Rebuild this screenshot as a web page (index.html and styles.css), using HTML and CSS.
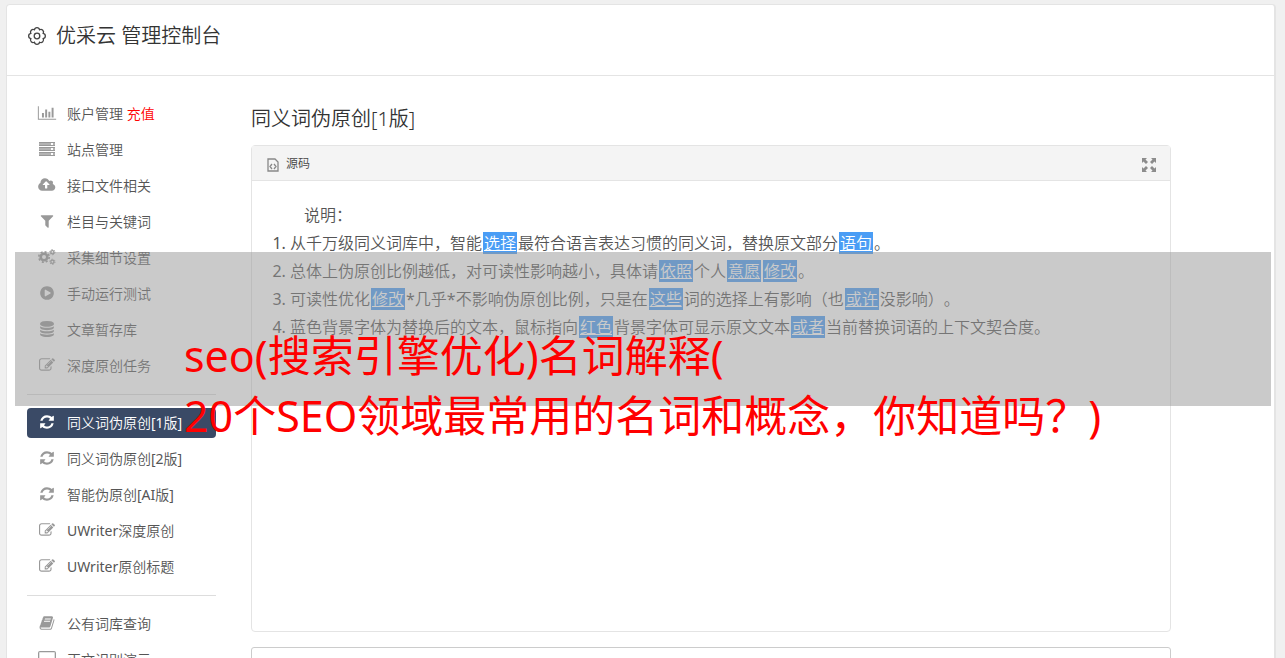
FILE: index.html
```html
<!DOCTYPE html>
<html lang="zh-CN">
<head>
  <meta charset="UTF-8">
  <meta name="viewport" content="width=device-width, initial-scale=1.0">
  <title>优采云 管理控制台</title>
  <link rel="stylesheet" href="styles.css">
</head>
<body>

<!-- Icon sprite -->
<svg class="sprite" aria-hidden="true">
  <symbol id="i-chart" viewBox="0 0 2048 1792"><path d="M680 896v512h-220v-512h220zm360-384v896h-220v-896h220zm1008 1024v128h-2048v-1536h110v1408h1938zm-648-768v640h-220v-640h220zm360-448v1088h-220v-1088h220z"/></symbol>
  <symbol id="i-server" viewBox="0 0 18 16"><path d="M1 1h16v4H1zM1 6h16v4H1zM1 11h16v4H1z" opacity=".75"/><path d="M1 1h16v1H1zM1 4h16v1H1zM1 6h16v1H1zM1 9h16v1H1zM1 11h16v1H1zM1 14h16v1H1z"/><path d="M13 2h2v2h-2zM13 7h2v2h-2zM13 12h2v2h-2z" fill="white"/></symbol>
  <symbol id="i-cloud" viewBox="0 0 1856 1792"><path d="M1216 864q0-14-9-23l-352-352q-9-9-23-9t-23 9l-351 351q-10 12-10 24 0 14 9 23t23 9h224v352q0 13 9.5 22.5t22.5 9.5h192q13 0 22.5-9.5t9.5-22.5v-352h224q13 0 22.5-9.5t9.5-22.5zm640 288q0 159-112.5 271.5t-271.5 112.5h-1088q-185 0-316.5-131.5t-131.5-316.5q0-130 70-240t188-165q-2-30-2-43 0-212 150-362t362-150q156 0 285.5 87t188.5 231q71-62 166-62 106 0 181 75t75 181q0 76-41 138 130 31 213.5 135.5t83.5 238.5z"/></symbol>
  <symbol id="i-filter" viewBox="0 0 1792 1792"><path d="M1595 295q17 41-14 70l-493 493v742q0 42-39 59-13 5-25 5-27 0-45-19l-256-256q-19-19-19-45v-486l-493-493q-31-29-14-70 17-39 59-39h1280q42 0 59 39z"/></symbol>
  <symbol id="i-cogs" viewBox="0 0 18 16">
    <g fill="none" stroke="currentColor">
      <circle cx="6" cy="8" r="3.3" stroke-width="2.6"/>
      <circle cx="6" cy="8" r="5.2" stroke-width="1.6" stroke-dasharray="2.04 2.04"/>
      <circle cx="14.4" cy="3.2" r="1.6" stroke-width="1.3"/>
      <circle cx="14.4" cy="3.2" r="2.6" stroke-width="1" stroke-dasharray="1.36 1.36"/>
      <circle cx="14.4" cy="12.8" r="1.6" stroke-width="1.3"/>
      <circle cx="14.4" cy="12.8" r="2.6" stroke-width="1" stroke-dasharray="1.36 1.36"/>
    </g>
  </symbol>
  <symbol id="i-play" viewBox="0 0 1792 1792"><path d="M896 128q209 0 385.5 103t279.5 279.5 103 385.5-103 385.5-279.5 279.5-385.5 103-385.5-103-279.5-279.5-103-385.5 103-385.5 279.5-279.5 385.5-103zm384 823q32-18 32-55t-32-55l-544-320q-31-19-64-1-32 19-32 56v640q0 37 32 56 16 8 32 8 17 0 32-9z"/></symbol>
  <symbol id="i-database" viewBox="0 0 1792 1792"><path d="M896 768q237 0 443-43t325-127v170q0 69-103 128t-280 93.5-385 34.5-385-34.5-280-93.5-103-128v-170q119 84 325 127t443 43zm0 768q237 0 443-43t325-127v170q0 69-103 128t-280 93.5-385 34.5-385-34.5-280-93.5-103-128v-170q119 84 325 127t443 43zm0-384q237 0 443-43t325-127v170q0 69-103 128t-280 93.5-385 34.5-385-34.5-280-93.5-103-128v-170q119 84 325 127t443 43zm0-1152q208 0 385 34.5t280 93.5 103 128v128q0 69-103 128t-280 93.5-385 34.5-385-34.5-280-93.5-103-128v-128q0-69 103-128t280-93.5 385-34.5z"/></symbol>
  <symbol id="i-edit" viewBox="0 0 1792 1792"><path d="M888 1184l116-116-152-152-116 116v56h96v96h56zm440-720q-16-16-33 1l-350 350q-17 17-1 33t33-1l350-350q17-17 1-33zm80 594v190q0 119-84.5 203.5t-203.5 84.5h-832q-119 0-203.5-84.5t-84.5-203.5v-832q0-119 84.5-203.5t203.5-84.5h832q63 0 117 25 15 7 18 23 3 17-9 29l-49 49q-14 14-32 8-23-6-45-6h-832q-66 0-113 47t-47 113v832q0 66 47 113t113 47h832q66 0 113-47t47-113v-126q0-13 9-22l64-64q15-15 35-7t20 29zm-96-738l288 288-672 672h-288v-288zm444 132l-92 92-288-288 92-92q28-28 68-28t68 28l152 152q28 28 28 68t-28 68z"/></symbol>
  <symbol id="i-refresh" viewBox="0 0 1792 1792"><path d="M1639 1056q0 5-1 7-64 268-268 434.5t-478 166.5q-146 0-282.5-55t-243.5-157l-129 129q-19 19-45 19t-45-19-19-45v-448q0-26 19-45t45-19h448q26 0 45 19t19 45-19 45l-137 137q71 66 161 102t187 36q134 0 250-65t186-179q11-17 53-117 8-23 30-23h192q13 0 22.5 9.5t9.5 22.5zm25-800v448q0 26-19 45t-45 19h-448q-26 0-45-19t-19-45 19-45l138-138q-148-137-349-137-134 0-250 65t-186 179q-11 17-53 117-8 23-30 23h-199q-13 0-22.5-9.5t-9.5-22.5v-7q65-268 270-434.5t480-166.5q146 0 284 55.5t245 156.5l130-129q19-19 45-19t45 19 19 45z"/></symbol>
  <symbol id="i-book" viewBox="0 0 1792 1792"><path d="M1703 478q40 57 18 129l-275 906q-19 64-76.500 107.500t-122.500 43.500h-923q-77 0-148.500-53.500t-99.500-131.500q-24-67-2-127 0-4 3-27t4-37q1-8-3-21.500t-3-19.500q2-11 8-21t16.500-23.500 16.500-23.500q23-38 45-91.500t30-91.500q3-10 .5-30t-.5-28q3-11 17-28t17-23q21-36 42-92t25-90q1-9-2.500-32t.5-28q4-13 22-30.500t22-22.500q19-26 42.500-84.500t27.500-96.500q1-8-3-25.500t-2-26.500q2-8 9-18t18-23 17-21q8-12 16.500-30.500t15-35 16-36 19.500-32 26.500-23.500 36-11.500 47.500 5.500l-1 3q38-9 51-9h761q74 0 114 56t18 130l-274 906q-36 119-71.500 153.500t-128.500 34.500h-869q-27 0-38 15-11 16-1 43 24 70 144 70h923q29 0 56-15.500t35-41.500l300-987q7-22 5-57 38 15 59 43zm-1064 2q-4 13 2 22.500t20 9.500h608q13 0 25.500-9.500t16.500-22.500l21-64q4-13-2-22.500t-20-9.500h-608q-13 0-25.500 9.500t-16.500 22.500zm-83 256q-4 13 2 22.500t20 9.500h608q13 0 25.500-9.500t16.500-22.500l21-64q4-13-2-22.500t-20-9.500h-608q-13 0-25.500 9.500t-16.500 22.500z"/></symbol>
  <symbol id="i-screen" viewBox="0 0 18 16"><path fill-rule="evenodd" d="M2 0h14a2 2 0 0 1 2 2v9a2 2 0 0 1-2 2h-5l1 3H6l1-3H2a2 2 0 0 1-2-2V2a2 2 0 0 1 2-2zM1.300 1.300v8.700h15.400V1.300z"/></symbol>
</svg>

<div class="container">
  <header class="header">
    <svg class="gear" viewBox="0 0 20 20" aria-hidden="true">
      <path d="M16.200 7.400A2.650 2.650 0 0 1 16.200 12.600A2.650 2.650 0 0 1 12.600 16.200A2.650 2.650 0 0 1 7.400 16.200A2.650 2.650 0 0 1 3.800 12.600A2.650 2.650 0 0 1 3.800 7.400A2.650 2.650 0 0 1 7.400 3.800A2.650 2.650 0 0 1 12.600 3.800A2.650 2.650 0 0 1 16.200 7.400Z"/>
      <circle cx="10" cy="10" r="2.800"/>
    </svg>
    <h1>优采云 管理控制台</h1>
  </header>

  <div class="content">
    <!-- Sidebar -->
    <nav class="sidebar">
      <a class="item" href="#"><svg class="icon"><use href="#i-chart"/></svg><span>账户管理 <span class="recharge">充值</span></span></a>
      <a class="item" href="#"><svg class="icon"><use href="#i-server"/></svg>站点管理</a>
      <a class="item" href="#"><svg class="icon"><use href="#i-cloud"/></svg>接口文件相关</a>
      <a class="item" href="#"><svg class="icon"><use href="#i-filter"/></svg>栏目与关键词</a>
      <a class="item" href="#"><svg class="icon"><use href="#i-cogs"/></svg>采集细节设置</a>
      <a class="item" href="#"><svg class="icon"><use href="#i-play"/></svg>手动运行测试</a>
      <a class="item" href="#"><svg class="icon"><use href="#i-database"/></svg>文章暂存库</a>
      <a class="item" href="#"><svg class="icon"><use href="#i-edit"/></svg>深度原创任务</a>
      <hr>
      <a class="item active" href="#"><svg class="icon"><use href="#i-refresh"/></svg>同义词伪原创[1版]</a>
      <a class="item" href="#"><svg class="icon"><use href="#i-refresh"/></svg>同义词伪原创[2版]</a>
      <a class="item" href="#"><svg class="icon"><use href="#i-refresh"/></svg>智能伪原创[AI版]</a>
      <a class="item" href="#"><svg class="icon"><use href="#i-edit"/></svg>UWriter深度原创</a>
      <a class="item" href="#"><svg class="icon"><use href="#i-edit"/></svg>UWriter原创标题</a>
      <hr>
      <a class="item" href="#"><svg class="icon"><use href="#i-book"/></svg>公有词库查询</a>
      <a class="item" href="#"><svg class="icon"><use href="#i-screen"/></svg>正文识别演示</a>
    </nav>

    <!-- Editor -->
    <main class="main">
      <h2>同义词伪原创[1版]</h2>
      <div class="editor">
        <div class="toolbar">
          <button type="button" class="source">
            <svg viewBox="0 0 12 14" aria-hidden="true"><path d="M1 1h7l3 3v9H1zM5 6L3 8.500l2 2.500M7 6l2 2.500L7 11"/></svg>
            源码
          </button>
          <button type="button" class="expand" aria-label="全屏">
            <svg viewBox="0 0 14 14" aria-hidden="true"><path d="M0 0h5L3.500 1.500 6 4 4 6 1.500 3.500 0 5zM14 0v5l-1.500-1.500L10 6 8 4l2.500-2.500L9 0zM0 14V9l1.500 1.500L4 8l2 2-2.500 2.500L5 14zM14 14H9l1.500-1.500L8 10l2-2 2.500 2.500L14 9z"/></svg>
          </button>
        </div>
        <div class="text">
          <p>说明：</p>
          <ol>
            <li>从千万级同义词库中，智能<u>选择</u>最符合语言表达习惯的同义词，替换原文部分<u>语句</u>。</li>
            <li>总体上伪原创比例越低，对可读性影响越小，具体请<u>依照</u>个人<u>意愿</u><u>修改</u>。</li>
            <li>可读性优化<u>修改</u>*几乎*不影响伪原创比例，只是在<u>这些</u>词的选择上有影响（也<u>或许</u>没影响）。</li>
            <li>蓝色背景字体为替换后的文本，鼠标指向<u>红色</u>背景字体可显示原文文本<u>或者</u>当前替换词语的上下文契合度。</li>
          </ol>
        </div>
      </div>
      <textarea class="input" aria-label="原文"></textarea>
    </main>
  </div>
</div>

<!-- Banner over the page -->
<div class="banner">
  seo(搜索引擎优化)名词解释(<br>20个SEO领域最常用的名词和概念，你知道吗？)
</div>

</body>
</html>
```
FILE: styles.css
```css
* {
  box-sizing: border-box;
}
body {
  margin: 0;
  height: 100vh;
  overflow: hidden;
  background-color: #f0f0f0;
  color: #555;
  font-family: "Noto Sans", "Noto Sans CJK SC DemiLight", "Noto Sans CJK SC", sans-serif;
  font-size: 14px;
  text-spacing-trim: space-all;
}
.sprite {
  display: none;
}
.container {
  margin: 4px 9px 0 6px;
  height: 100%;
  overflow: hidden;
  background-color: white;
  border: 1px solid #e4e4e4;
  border-right-width: 2px;
  border-radius: 4px;
}
.header {
  display: flex;
  align-items: center;
  gap: 9px;
  height: 71px;
  padding: 0 20px 9px;
  border-bottom: 1px solid #e4e4e4;
}
.gear {
  width: 20px;
  height: 20px;
  fill: none;
  stroke: #444;
  stroke-width: 1.3;
}
h1, h2 {
  margin: 0;
  color: #333;
  font-size: 20px;
  font-weight: 350;
  line-height: 30px;
}
.content {
  display: flex;
  gap: 35px;
  padding: 23px 103px 0 20px;
}
.sidebar {
  display: flex;
  flex-direction: column;
  gap: 6px;
  width: 189px;
  flex-shrink: 0;
}
.sidebar hr {
  width: 100%;
  margin: 7px 0;
  border: 0;
  border-top: 1px solid #ddd;
}
.item {
  display: flex;
  align-items: center;
  gap: 10px;
  height: 30px;
  padding: 0 10px 2px;
  border-radius: 4px;
  color: #555;
  text-decoration: none;
  white-space: nowrap;
}
.item.active {
  background-color: #3a4a66;
  color: white;
}
.icon {
  width: 20px;
  height: 16px;
  color: #999;
  fill: currentColor;
}
.active .icon {
  color: white;
}
.recharge {
  color: red;
}
.main {
  flex: 1;
  min-width: 0;
}
h2 {
  margin: 5px 0 11px;
}
.editor {
  min-height: 487px;
  border: 1px solid #e4e4e4;
  border-radius: 4px;
}
.toolbar {
  display: flex;
  justify-content: space-between;
  align-items: center;
  height: 35px;
  padding: 0 14px 0 15px;
  background-color: #f4f4f4;
  border-bottom: 1px solid #e4e4e4;
}
.toolbar button {
  display: flex;
  align-items: flex-end;
  gap: 7px;
  min-height: 18px;
  padding: 0;
  border: none;
  background: none;
  color: #444;
  font: inherit;
  font-size: 12px;
  cursor: pointer;
}
.source svg {
  width: 12px;
  height: 14px;
  fill: none;
  stroke: #888;
  stroke-width: 1.3;
}
.expand svg {
  width: 14px;
  height: 14px;
  fill: #8c8c8c;
}
.text {
  padding: 20px;
  font-size: 16px;
  line-height: 28px;
}
.text p {
  margin: 0;
  text-indent: 2em;
}
.text ol {
  margin: 0;
  padding-left: 18px;
}
.text u {
  margin: 0 1px;
  padding: 0 1px;
  background-color: #4a9df5;
  color: white;
}
.input {
  display: block;
  width: 100%;
  height: 120px;
  margin-top: 15px;
  border: 1px solid #ccc;
  border-radius: 3px;
  resize: none;
}
.banner {
  position: absolute;
  top: 252px;
  left: 15px;
  right: 14px;
  height: 154px;
  padding: 74px 0 0 169px;
  background-color: rgba(150, 150, 150, 0.5);
  color: red;
  font-family: "Noto Sans", "Noto Sans CJK SC", sans-serif;
  font-size: 43px;
  line-height: 60px;
  white-space: nowrap;
}
```
